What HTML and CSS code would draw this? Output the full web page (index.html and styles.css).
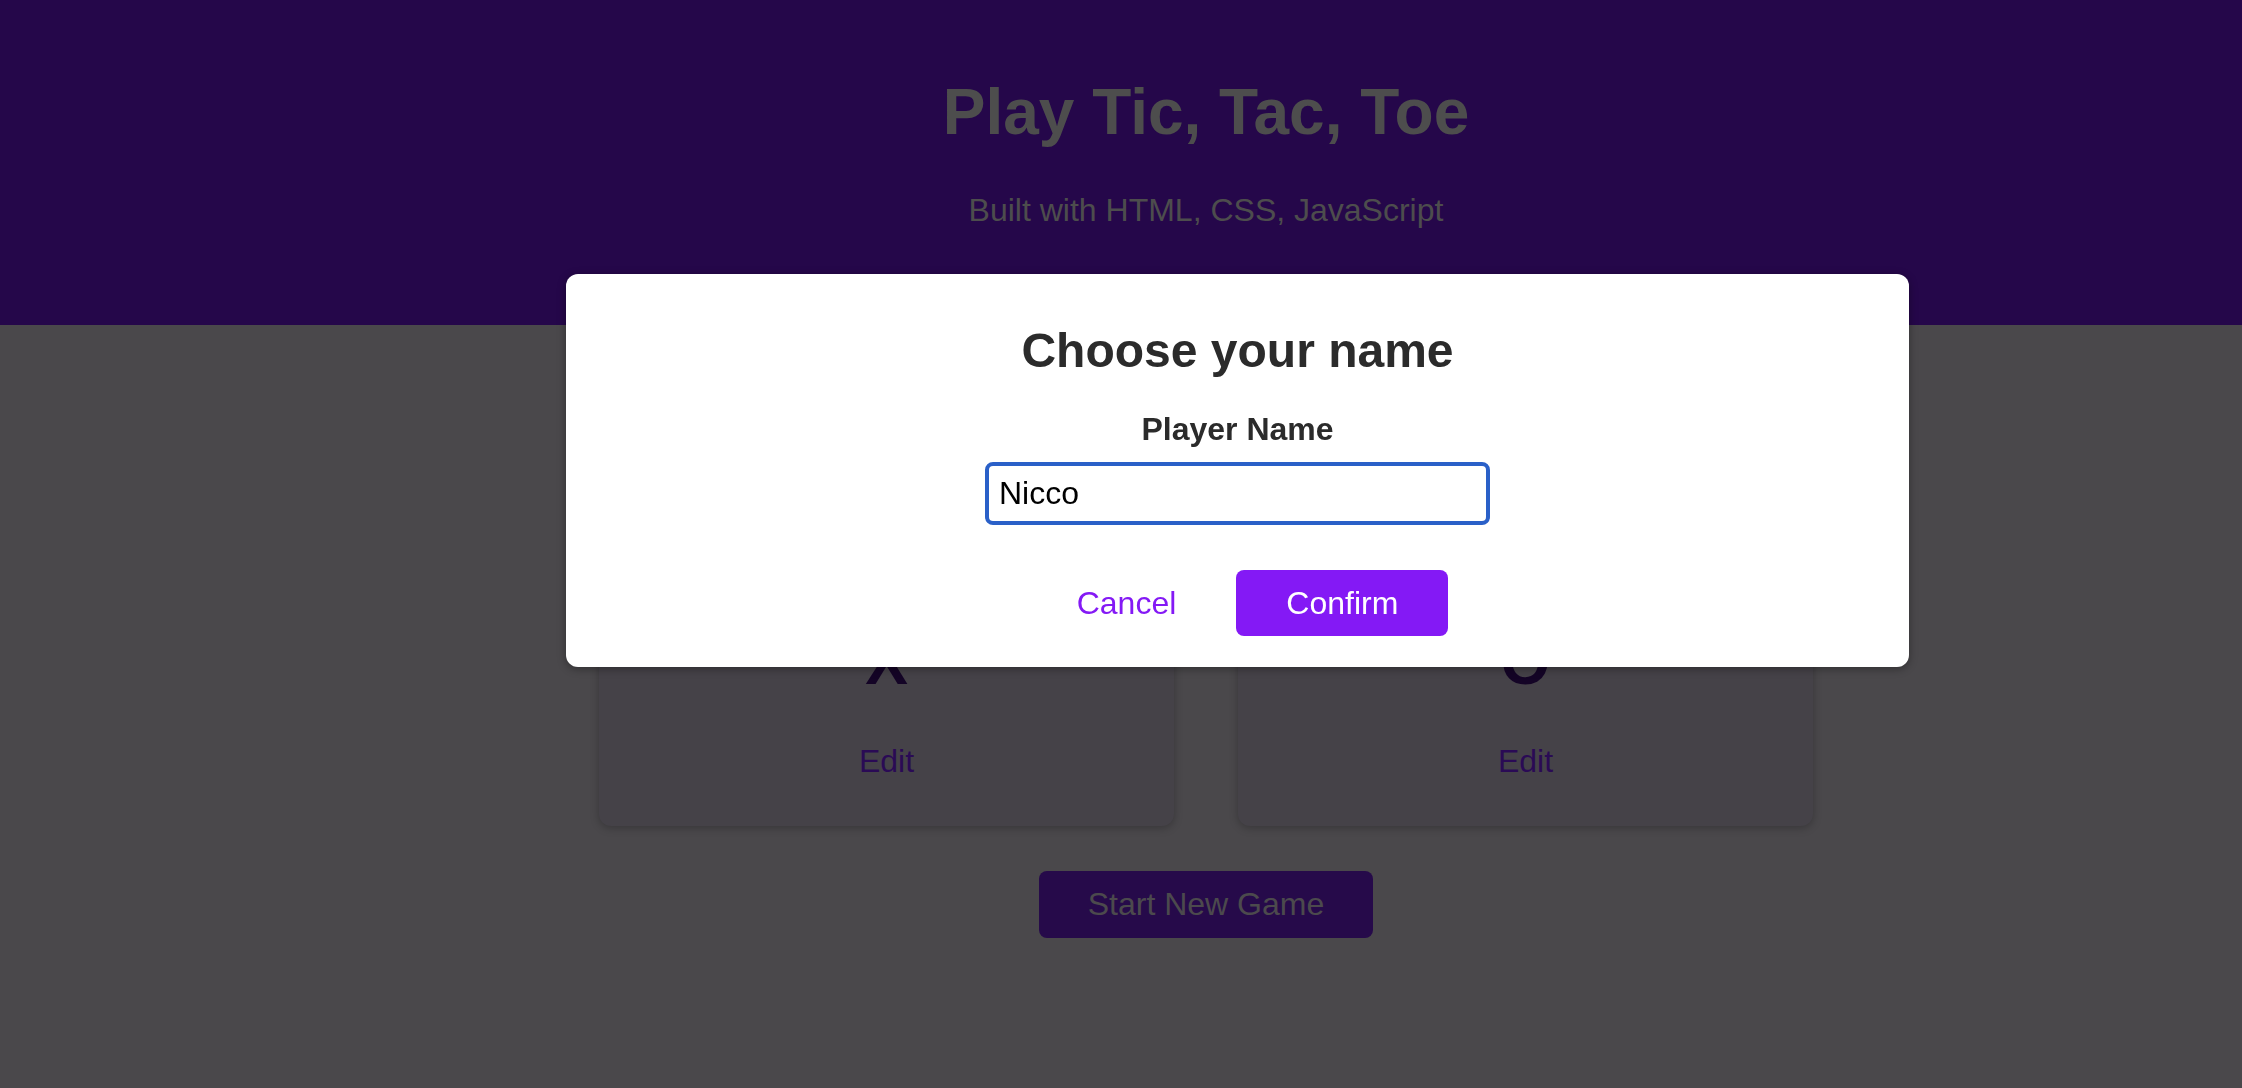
FILE: index.html
```html
<!DOCTYPE html>
<html lang="en">
<head>
<meta charset="utf-8">
<title>Tic Tac Toe</title>
<link rel="stylesheet" href="styles.css">
</head>
<body>
<header class="site-header">
  <h1 class="site-title">Play Tic, Tac, Toe</h1>
  <p class="site-subtitle">Built with HTML, CSS, JavaScript</p>
</header>
<main class="main">
  <ol class="players">
    <li class="player-card">
      <h2 class="player-name">PLAYER NAME</h2>
      <p class="player-symbol">X</p>
      <button class="btn btn-alt">Edit</button>
    </li>
    <li class="player-card">
      <h2 class="player-name">PLAYER NAME</h2>
      <p class="player-symbol">O</p>
      <button class="btn btn-alt">Edit</button>
    </li>
  </ol>
  <div class="start-row">
    <button class="btn btn-start">Start New Game</button>
  </div>
</main>
<aside class="modal">
  <h2 class="modal-title">Choose your name</h2>
  <form class="modal-form">
    <label class="field-label" for="playername">Player Name</label>
    <input class="field-input" id="playername" type="text" value="Nicco" autofocus>
    <div class="modal-actions">
      <button type="button" class="btn btn-cancel">Cancel</button>
      <button type="button" class="btn btn-confirm">Confirm</button>
    </div>
  </form>
</aside>
</body>
</html>
```
FILE: styles.css
```css
* { box-sizing: border-box; }

html, body {
  margin: 0;
  padding: 0;
}

body {
  background: #4a484b;
  font-family: "Liberation Sans", Arial, sans-serif;
  min-height: 1088px;
}

.site-header {
  background: #25074a;
  padding: 75px 0 96px 170px;
  text-align: center;
}

.site-title {
  margin: 0;
  font-size: 64px;
  line-height: 74px;
  font-weight: bold;
  color: #4d4d4d;
}

.site-subtitle {
  margin: 43px 0 0;
  font-size: 32px;
  line-height: 37px;
  color: #4d4d4d;
}

.main {
  padding-left: 170px;
}

.players {
  list-style: none;
  margin: 165px 0 0;
  padding: 0;
  display: flex;
  justify-content: center;
  gap: 64px;
}

.player-card {
  width: 575px;
  background: #454248;
  border-radius: 12px;
  box-shadow: 0 2px 8px rgba(0, 0, 0, 0.25);
  padding: 32px 0;
  text-align: center;
}

.player-name {
  margin: 0;
  font-size: 48px;
  line-height: 55px;
  color: #2a2a2a;
}

.player-symbol {
  margin: 48px 0 30px;
  font-size: 64px;
  line-height: 74px;
  font-weight: bold;
  color: #140426;
}

.btn {
  font-family: "Liberation Sans", Arial, sans-serif;
  font-size: 32px;
  line-height: 37px;
  border: none;
  border-radius: 8px;
  padding: 14px 48px;
  cursor: pointer;
}

.btn-alt {
  background: transparent;
  color: #2a0a55;
}

.start-row {
  display: flex;
  justify-content: center;
  margin-top: 45px;
}

.btn-start {
  background: #260a4a;
  color: #4c4a4d;
  padding: 15px 49px;
}

.modal {
  position: fixed;
  left: 566px;
  top: 274px;
  width: 1343px;
  background: #ffffff;
  border-radius: 12px;
  padding: 49px 48px 31px;
  box-shadow: 0 2px 8px rgba(0, 0, 0, 0.35);
  text-align: center;
  color: #2b2b2b;
}

.modal-title {
  margin: 0;
  font-size: 48px;
  line-height: 55px;
  font-weight: bold;
}

.modal-form {
  display: flex;
  flex-direction: column;
  align-items: center;
}

.field-label {
  margin-top: 33px;
  font-size: 32px;
  line-height: 37px;
  font-weight: bold;
}

.field-input {
  margin-top: 14px;
  width: 505px;
  height: 63px;
  border: 4px solid #2a60c8;
  border-radius: 8px;
  padding: 0 10px;
  font-family: "Liberation Sans", Arial, sans-serif;
  font-size: 32px;
  color: #000000;
  caret-color: #000000;
  outline: none;
  background: #ffffff;
}

.modal-actions {
  margin-top: 45px;
  display: flex;
  justify-content: center;
  gap: 10px;
}

.btn-cancel {
  background: transparent;
  color: #8419f5;
  padding: 14px 50px;
  line-height: 38px;
}

.btn-confirm {
  background: #8419f5;
  color: #ffffff;
  padding: 14px 50px;
  line-height: 38px;
}
```
